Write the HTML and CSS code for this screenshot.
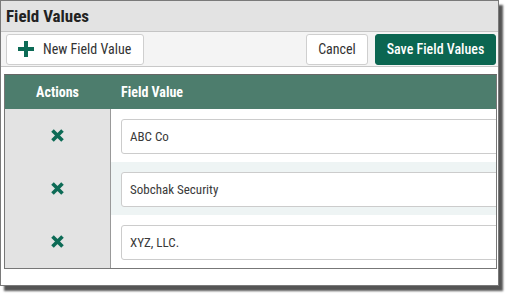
FILE: index.html
```html
<!DOCTYPE html>
<html lang="en">
<head>
    <meta charset="UTF-8">
    <meta name="viewport" content="width=device-width, initial-scale=1.0">
    <title>Field Values</title>
    <link rel="stylesheet" href="styles.css">
</head>
<body>
    <div class="window">
        <!-- title -->
        <div class="title-bar">Field Values</div>

        <!-- toolbar -->
        <div class="toolbar">
            <button class="btn btn-new">
                <svg class="plus-icon" width="16" height="16" viewBox="0 0 16 16">
                    <path d="M6 0h4v6h6v4h-6v6h-4v-6h-6v-4h6z" fill="#0d6b56"/>
                </svg>
                New Field Value
            </button>
            <div class="toolbar-right">
                <button class="btn btn-cancel">Cancel</button>
                <button class="btn btn-save">Save Field Values</button>
            </div>
        </div>

        <div class="content">
            <div class="grid">
                <div class="grid-head">
                    <div class="col-actions">Actions</div>
                    <div class="col-value">Field Value</div>
                </div>
                <div class="grid-row">
                    <div class="col-actions">
                        <svg class="remove-icon" width="13" height="13" viewBox="0 0 13 13">
                            <path d="M1.5 1.5L11.5 11.5M11.5 1.5L1.5 11.5" stroke="#0d6b56" stroke-width="3.6"/>
                        </svg>
                    </div>
                    <div class="col-value"><input class="value-input" type="text" value="ABC Co"></div>
                </div>
                <div class="grid-row striped">
                    <div class="col-actions">
                        <svg class="remove-icon" width="13" height="13" viewBox="0 0 13 13">
                            <path d="M1.5 1.5L11.5 11.5M11.5 1.5L1.5 11.5" stroke="#0d6b56" stroke-width="3.6"/>
                        </svg>
                    </div>
                    <div class="col-value"><input class="value-input" type="text" value="Sobchak Security"></div>
                </div>
                <div class="grid-row">
                    <div class="col-actions">
                        <svg class="remove-icon" width="13" height="13" viewBox="0 0 13 13">
                            <path d="M1.5 1.5L11.5 11.5M11.5 1.5L1.5 11.5" stroke="#0d6b56" stroke-width="3.6"/>
                        </svg>
                    </div>
                    <div class="col-value"><input class="value-input" type="text" value="XYZ, LLC."></div>
                </div>
            </div>
        </div>
    </div>
</body>
</html>
```

FILE: styles.css
```css
body {
    margin: 0;
    min-height: 296px;
    background-color: #fff;
    font-family: "Roboto Condensed", "Liberation Sans Narrow", Roboto, sans-serif;
    color: #333;
}
.window {
    box-sizing: border-box;
    width: 499px;
    height: 286px;
    border: 1px solid #7a7a7a;
    background-color: #fff;
    box-shadow: 4px 5px 2px #555;
    overflow: hidden;
}
.title-bar {
    height: 30px;
    line-height: 30px;
    padding-left: 5px;
    background-color: #e3e3e3;
    border-bottom: 1px solid #c4c4c4;
    font-size: 17px;
    font-weight: bold;
    color: #222;
}
.toolbar {
    display: flex;
    justify-content: space-between;
    align-items: center;
    height: 34px;
    padding: 0 2px 0 5px;
    background-color: #f4f4f4;
    border-bottom: 1px solid #c8c8c8;
}
.toolbar-right {
    display: flex;
    gap: 7px;
}
.btn {
    height: 31px;
    border: 1px solid #cfcfcf;
    border-radius: 3px;
    background-color: #fff;
    font-family: inherit;
    font-size: 14px;
    color: #333;
    padding: 0 10px;
}
.btn-new {
    display: flex;
    align-items: center;
    gap: 9px;
    width: 138px;
    padding-left: 11px;
}
.btn-cancel {
    width: 62px;
}
.btn-save {
    width: 121px;
    background-color: #0b6651;
    border-color: #0b6651;
    color: #fff;
    font-weight: 500;
}
.content {
    padding: 7px 0 0 3px;
}
.grid {
    width: 491px;
    border: 1px solid #777;
    border-top-color: #666;
}
.grid-head {
    display: flex;
    height: 34px;
    align-items: center;
    background-color: #4d7d6d;
    color: #fff;
    font-size: 14px;
    font-weight: bold;
}
.grid-head .col-actions {
    text-align: center;
    border-right: 1px solid transparent;
}
.col-actions {
    width: 105px;
    flex-shrink: 0;
}
.col-value {
    flex: 1;
}
.grid-head .col-value {
    padding-left: 10px;
}
.grid-row {
    display: flex;
    align-items: stretch;
}
.grid-row .col-actions {
    display: flex;
    align-items: center;
    justify-content: center;
    background-color: #e3e3e3;
    border-right: 1px solid #999;
}
.grid-row .col-value {
    padding: 10px 0 8px 10px;
    overflow: hidden;
}
.striped .col-value {
    background-color: #eef4f4;
}
.value-input {
    box-sizing: border-box;
    width: 420px;
    height: 35px;
    border: 1px solid #ccc;
    border-radius: 3px;
    padding: 0 8px;
    font-family: inherit;
    font-size: 13px;
    color: #3a3a3a;
    background-color: #fff;
}
.remove-icon {
    display: block;
}
```
